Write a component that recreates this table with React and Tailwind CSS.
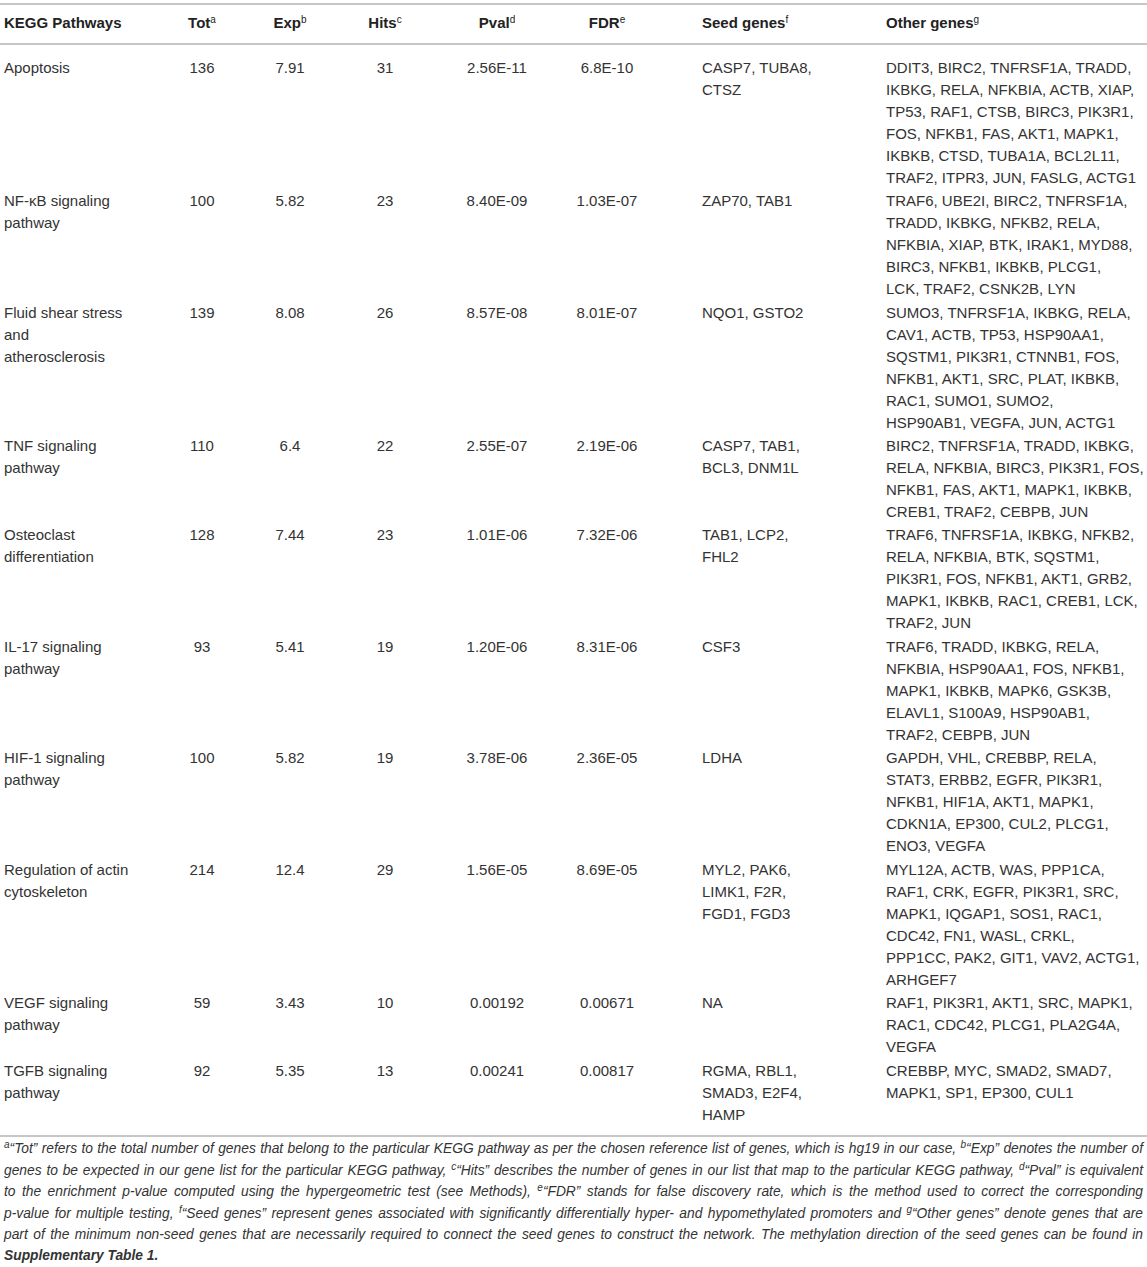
import React from "react";

const rows = [
  {
    name: ["Apoptosis"],
    tot: "136",
    exp: "7.91",
    hits: "31",
    pval: "2.56E-11",
    fdr: "6.8E-10",
    seed: ["CASP7, TUBA8,", "CTSZ"],
    other: [
      "DDIT3, BIRC2, TNFRSF1A, TRADD,",
      "IKBKG, RELA, NFKBIA, ACTB, XIAP,",
      "TP53, RAF1, CTSB, BIRC3, PIK3R1,",
      "FOS, NFKB1, FAS, AKT1, MAPK1,",
      "IKBKB, CTSD, TUBA1A, BCL2L11,",
      "TRAF2, ITPR3, JUN, FASLG, ACTG1",
    ],
  },
  {
    name: ["NF-κB signaling", "pathway"],
    tot: "100",
    exp: "5.82",
    hits: "23",
    pval: "8.40E-09",
    fdr: "1.03E-07",
    seed: ["ZAP70, TAB1"],
    other: [
      "TRAF6, UBE2I, BIRC2, TNFRSF1A,",
      "TRADD, IKBKG, NFKB2, RELA,",
      "NFKBIA, XIAP, BTK, IRAK1, MYD88,",
      "BIRC3, NFKB1, IKBKB, PLCG1,",
      "LCK, TRAF2, CSNK2B, LYN",
    ],
  },
  {
    name: ["Fluid shear stress", "and", "atherosclerosis"],
    tot: "139",
    exp: "8.08",
    hits: "26",
    pval: "8.57E-08",
    fdr: "8.01E-07",
    seed: ["NQO1, GSTO2"],
    other: [
      "SUMO3, TNFRSF1A, IKBKG, RELA,",
      "CAV1, ACTB, TP53, HSP90AA1,",
      "SQSTM1, PIK3R1, CTNNB1, FOS,",
      "NFKB1, AKT1, SRC, PLAT, IKBKB,",
      "RAC1, SUMO1, SUMO2,",
      "HSP90AB1, VEGFA, JUN, ACTG1",
    ],
  },
  {
    name: ["TNF signaling", "pathway"],
    tot: "110",
    exp: "6.4",
    hits: "22",
    pval: "2.55E-07",
    fdr: "2.19E-06",
    seed: ["CASP7, TAB1,", "BCL3, DNM1L"],
    other: [
      "BIRC2, TNFRSF1A, TRADD, IKBKG,",
      "RELA, NFKBIA, BIRC3, PIK3R1, FOS,",
      "NFKB1, FAS, AKT1, MAPK1, IKBKB,",
      "CREB1, TRAF2, CEBPB, JUN",
    ],
  },
  {
    name: ["Osteoclast", "differentiation"],
    tot: "128",
    exp: "7.44",
    hits: "23",
    pval: "1.01E-06",
    fdr: "7.32E-06",
    seed: ["TAB1, LCP2,", "FHL2"],
    other: [
      "TRAF6, TNFRSF1A, IKBKG, NFKB2,",
      "RELA, NFKBIA, BTK, SQSTM1,",
      "PIK3R1, FOS, NFKB1, AKT1, GRB2,",
      "MAPK1, IKBKB, RAC1, CREB1, LCK,",
      "TRAF2, JUN",
    ],
  },
  {
    name: ["IL-17 signaling", "pathway"],
    tot: "93",
    exp: "5.41",
    hits: "19",
    pval: "1.20E-06",
    fdr: "8.31E-06",
    seed: ["CSF3"],
    other: [
      "TRAF6, TRADD, IKBKG, RELA,",
      "NFKBIA, HSP90AA1, FOS, NFKB1,",
      "MAPK1, IKBKB, MAPK6, GSK3B,",
      "ELAVL1, S100A9, HSP90AB1,",
      "TRAF2, CEBPB, JUN",
    ],
  },
  {
    name: ["HIF-1 signaling", "pathway"],
    tot: "100",
    exp: "5.82",
    hits: "19",
    pval: "3.78E-06",
    fdr: "2.36E-05",
    seed: ["LDHA"],
    other: [
      "GAPDH, VHL, CREBBP, RELA,",
      "STAT3, ERBB2, EGFR, PIK3R1,",
      "NFKB1, HIF1A, AKT1, MAPK1,",
      "CDKN1A, EP300, CUL2, PLCG1,",
      "ENO3, VEGFA",
    ],
  },
  {
    name: ["Regulation of actin", "cytoskeleton"],
    tot: "214",
    exp: "12.4",
    hits: "29",
    pval: "1.56E-05",
    fdr: "8.69E-05",
    seed: ["MYL2, PAK6,", "LIMK1, F2R,", "FGD1, FGD3"],
    other: [
      "MYL12A, ACTB, WAS, PPP1CA,",
      "RAF1, CRK, EGFR, PIK3R1, SRC,",
      "MAPK1, IQGAP1, SOS1, RAC1,",
      "CDC42, FN1, WASL, CRKL,",
      "PPP1CC, PAK2, GIT1, VAV2, ACTG1,",
      "ARHGEF7",
    ],
  },
  {
    name: ["VEGF signaling", "pathway"],
    tot: "59",
    exp: "3.43",
    hits: "10",
    pval: "0.00192",
    fdr: "0.00671",
    seed: ["NA"],
    other: [
      "RAF1, PIK3R1, AKT1, SRC, MAPK1,",
      "RAC1, CDC42, PLCG1, PLA2G4A,",
      "VEGFA",
    ],
  },
  {
    name: ["TGFB signaling", "pathway"],
    tot: "92",
    exp: "5.35",
    hits: "13",
    pval: "0.00241",
    fdr: "0.00817",
    seed: ["RGMA, RBL1,", "SMAD3, E2F4,", "HAMP"],
    other: [
      "CREBBP, MYC, SMAD2, SMAD7,",
      "MAPK1, SP1, EP300, CUL1",
    ],
  },
];

const cols =
  "grid grid-cols-[160px_84px_92px_98px_126px_94px_228px_1fr]";

function Sup({ children }) {
  return <sup className="text-[10px] font-normal">{children}</sup>;
}

function Lines({ items }) {
  return (
    <div>
      {items.map((l, i) => (
        <div key={i} className="whitespace-nowrap">
          {l}
        </div>
      ))}
    </div>
  );
}

export default function App() {
  return (
    <div
      className="bg-white text-[#333] pt-[3px]"
      style={{ fontFamily: '"Liberation Sans", Arial, sans-serif' }}
    >
      {/* Table */}
      <div className="border-t-2 border-[#c6c6c6] text-[15px] leading-[22px]">
        {/* Header */}
        <div className={`${cols} font-bold text-[#222] pt-[7px] pb-[9px] border-b-2 border-[#c6c6c6]`}>
          <div className="pl-1">KEGG Pathways</div>
          <div className="text-center">
            Tot<Sup>a</Sup>
          </div>
          <div className="text-center">
            Exp<Sup>b</Sup>
          </div>
          <div className="text-center">
            Hits<Sup>c</Sup>
          </div>
          <div className="text-center">
            Pval<Sup>d</Sup>
          </div>
          <div className="text-center">
            FDR<Sup>e</Sup>
          </div>
          <div className="pl-[48px]">
            Seed genes<Sup>f</Sup>
          </div>
          <div className="pl-1">
            Other genes<Sup>g</Sup>
          </div>
        </div>

        {/* Body */}
        <div className="pt-[11px] pb-[9px] border-b-2 border-[#c6c6c6]">
          {rows.map((r, i) => (
            <div key={i} className={`${cols} py-[0.72px]`}>
              <div className="pl-1">
                <Lines items={r.name} />
              </div>
              <div className="text-center">{r.tot}</div>
              <div className="text-center">{r.exp}</div>
              <div className="text-center">{r.hits}</div>
              <div className="text-center">{r.pval}</div>
              <div className="text-center">{r.fdr}</div>
              <div className="pl-[48px]">
                <Lines items={r.seed} />
              </div>
              <div className="pl-1">
                <Lines items={r.other} />
              </div>
            </div>
          ))}
        </div>
      </div>

      {/* Footnote */}
      <div className="px-1 pt-[1px] italic text-[13.8px] leading-[21.4px] text-[#333]">
        <div className="text-justify [text-align-last:justify] whitespace-nowrap">
          <Sup>a</Sup>“Tot” refers to the total number of genes that belong to the particular KEGG pathway as per the chosen reference list of genes, which is hg19 in our case, <Sup>b</Sup>“Exp” denotes the number of
        </div>
        <div className="text-justify [text-align-last:justify] whitespace-nowrap">
          genes to be expected in our gene list for the particular KEGG pathway, <Sup>c</Sup>“Hits” describes the number of genes in our list that map to the particular KEGG pathway, <Sup>d</Sup>“Pval” is equivalent
        </div>
        <div className="text-justify [text-align-last:justify] whitespace-nowrap">
          to the enrichment p-value computed using the hypergeometric test (see Methods), <Sup>e</Sup>“FDR” stands for false discovery rate, which is the method used to correct the corresponding
        </div>
        <div className="text-justify [text-align-last:justify] whitespace-nowrap">
          p-value for multiple testing, <Sup>f</Sup>“Seed genes” represent genes associated with significantly differentially hyper- and hypomethylated promoters and <Sup>g</Sup>“Other genes” denote genes that are
        </div>
        <div className="text-justify [text-align-last:justify] whitespace-nowrap">
          part of the minimum non-seed genes that are necessarily required to connect the seed genes to construct the network. The methylation direction of the seed genes can be found in
        </div>
        <div className="font-bold">Supplementary Table 1.</div>
      </div>
    </div>
  );
}
